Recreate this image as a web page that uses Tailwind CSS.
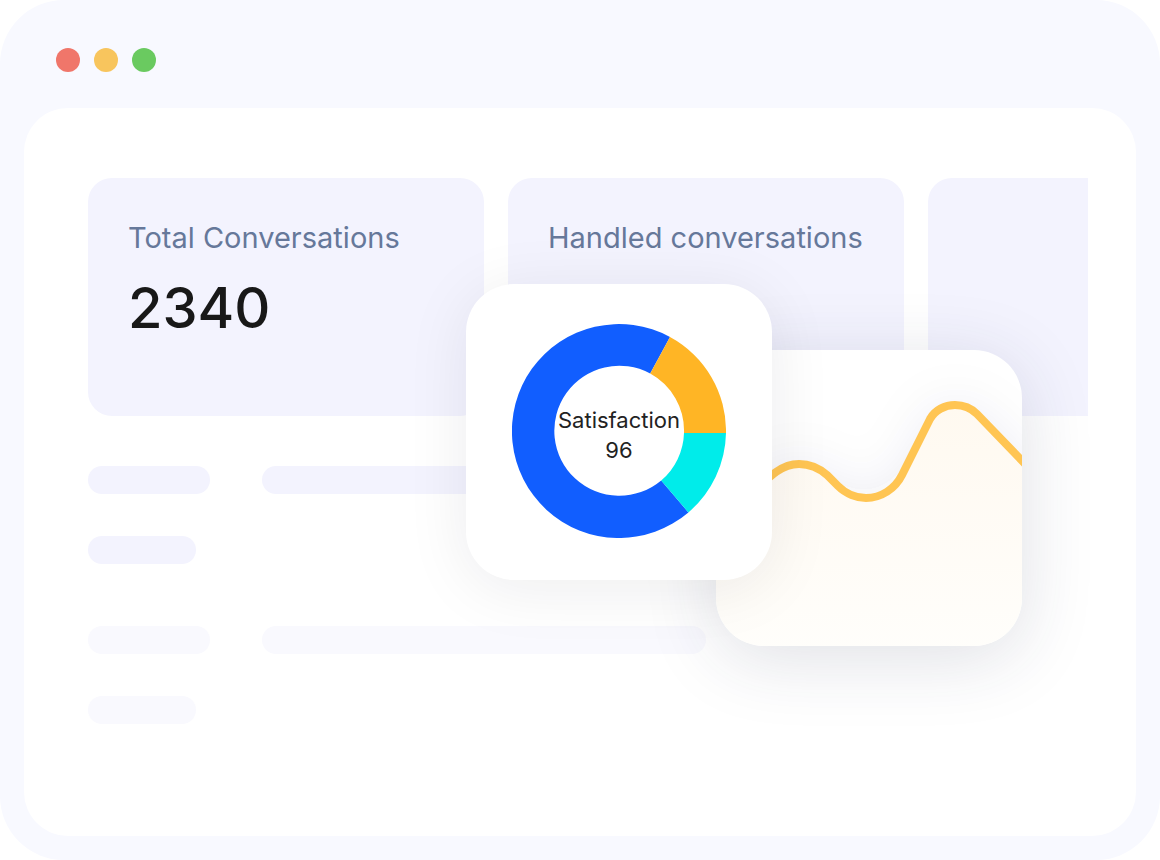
<!DOCTYPE html>
<html lang="en">
<head>
  <meta charset="UTF-8">
  <meta name="viewport" content="width=device-width, initial-scale=1.0">
  <title>Conversations overview</title>
  <script src="https://cdn.jsdelivr.net/npm/@tailwindcss/browser@4"></script>
</head>
<body class="bg-white font-['Inter',sans-serif]">
  <div class="min-h-screen flex flex-col rounded-[64px] bg-[#f8f9ff] px-6 pb-6">
    <!-- Window controls -->
    <header class="flex gap-3.5 px-8 pt-12 pb-9">
      <span class="size-6 rounded-full bg-[#f0766a]"></span>
      <span class="size-6 rounded-full bg-[#f8c55d]"></span>
      <span class="size-6 rounded-full bg-[#6aca60]"></span>
    </header>

    <main class="relative flex-1 rounded-[44px] bg-white pt-[70px] pr-12 pb-16 pl-16">
      <!-- Stats, the last card runs off the edge -->
      <section class="flex gap-6 overflow-hidden">
        <article class="flex h-[238px] w-[396px] shrink-0 flex-col gap-4 rounded-3xl bg-[#f3f3fe] p-10">
          <h2 class="text-[29px] leading-10 text-[#66789a]">Total Conversations</h2>
          <p class="text-[56px] leading-[68px] font-medium text-[#181818]">2340</p>
        </article>
        <article class="flex h-[238px] w-[396px] shrink-0 flex-col rounded-3xl bg-[#f3f3fe] p-10">
          <h2 class="text-[29px] leading-10 whitespace-nowrap text-[#66789a]">Handled conversations</h2>
        </article>
        <article class="h-[238px] w-[396px] shrink-0 rounded-3xl bg-[#f3f3fe]"></article>
      </section>

      <!-- Placeholder rows -->
      <section class="mt-[50px] flex flex-col gap-[62px]">
        <div class="flex flex-col gap-[42px]">
          <div class="flex gap-[52px]">
            <span class="h-7 w-[122px] rounded-full bg-[#f3f3fe]"></span>
            <span class="h-7 w-[444px] rounded-full bg-[#f3f3fe]"></span>
          </div>
          <span class="h-7 w-[108px] rounded-full bg-[#f3f3fe]"></span>
        </div>
        <div class="flex flex-col gap-[42px]">
          <div class="flex gap-[52px]">
            <span class="h-7 w-[122px] rounded-full bg-[#f9f9fe]"></span>
            <span class="h-7 w-[444px] rounded-full bg-[#f9f9fe]"></span>
          </div>
          <span class="h-7 w-[108px] rounded-full bg-[#f9f9fe]"></span>
        </div>
      </section>

      <!-- Floating trend card -->
      <div class="absolute top-[242px] left-[692px] h-[296px] w-[306px] overflow-hidden rounded-[48px] bg-white shadow-[0_12px_72px_rgba(40,48,80,0.15)]">
        <svg class="size-full" viewBox="0 0 306 296" role="img" aria-label="Conversation trend">
          <defs>
            <linearGradient id="area" x1="0" y1="0" x2="0" y2="1">
              <stop offset="0" stop-color="#fff9f0" />
              <stop offset="1" stop-color="#fffefb" />
            </linearGradient>
            <filter id="glow" x="-40%" y="-60%" width="180%" height="220%">
              <feDropShadow dx="0" dy="0" stdDeviation="26" flood-color="#3c466e" flood-opacity="0.08" />
            </filter>
          </defs>
          <path filter="url(#glow)" fill="url(#area)" d="M-10 190 L40 140 C54 126 66 114 83 114 C93 114 103 118 111 125 L126 139 C132 145 141 148 150 148 C165 148 179 139 186 125 L214 69 C219 60 229 55 239 55 C247 55 255 58 261 64 L316 121 V306 H-10 Z" />
          <path fill="none" stroke="#ffc553" stroke-width="8" d="M-10 190 L40 140 C54 126 66 114 83 114 C93 114 103 118 111 125 L122 136 C130 144 141 148 150 148 C165 148 179 139 186 125 L214 69 C219 60 229 55 239 55 C247 55 255 58 261 64 L316 121" />
        </svg>
      </div>

      <!-- Floating satisfaction card -->
      <div class="absolute top-[176px] left-[442px] flex h-[296px] w-[306px] justify-center rounded-[48px] bg-white pt-10 shadow-[0_8px_64px_rgba(30,30,40,0.08)]">
        <div class="relative size-[214px]">
          <svg class="size-full" viewBox="0 0 214 214" aria-hidden="true">
            <path fill="#115eff" d="M176.4 188.4 A107 107 0 1 1 158 13 L138.2 49.6 A65 65 0 1 0 149.2 156.5 Z" />
            <path fill="#ffb525" d="M158 13 A107 107 0 0 1 214 109 H172 A65 65 0 0 0 138.2 49.6 Z" />
            <path fill="#00ecea" d="M214 109 A107 107 0 0 1 176.4 188.4 L149.2 156.5 A65 65 0 0 0 172 109 Z" />
          </svg>
          <div class="absolute inset-0 flex flex-col items-center justify-center pt-2 text-[22px] leading-[30px] text-[#222222]">
            <span>Satisfaction</span>
            <span>96</span>
          </div>
        </div>
      </div>
    </main>
  </div>
</body>
</html>
